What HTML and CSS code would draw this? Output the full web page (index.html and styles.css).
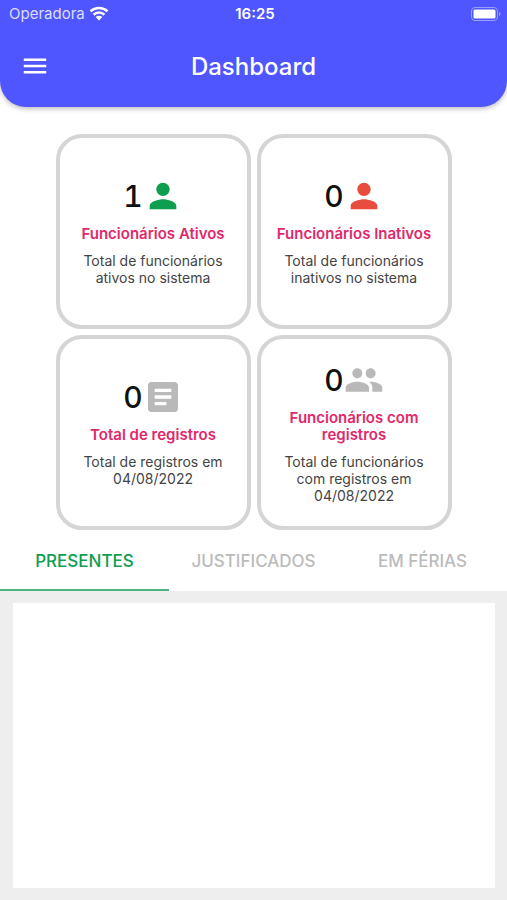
FILE: index.html
```
<!DOCTYPE html>
<html lang="pt-BR">

<head>
  <meta charset="utf-8">
  <meta name="viewport" content="width=device-width, initial-scale=1">
  <title>Dashboard</title>
  <link rel="stylesheet" href="styles.css">
</head>

<body>
  <header class="header">
    <div class="status">
      <div class="carrier">
        <span>Operadora</span>
        <svg class="wifi" viewBox="0 0 20 15">
          <path d="M1.5 5.4a12.3 12.3 0 0 1 17 0M4.6 8.7a7.8 7.8 0 0 1 10.8 0" />
          <path class="fill" d="M10 14.5 6.6 11a4.9 4.9 0 0 1 6.8 0z" />
        </svg>
      </div>
      <span class="time">16:25</span>
      <svg class="battery" viewBox="0 0 30 14">
        <rect class="shell" x="0.5" y="0.5" width="26" height="13" rx="3.5" />
        <rect class="level" x="2.5" y="2.5" width="22" height="9" rx="1.5" />
        <path class="tip" d="M28 5c2 .6 2 3.400 0 4z" />
      </svg>
    </div>
    <div class="toolbar">
      <button class="menu" type="button" aria-label="Menu">
        <svg viewBox="0 0 24 24">
          <path d="M3 18h18v-2H3v2zm0-5h18v-2H3v2zm0-7v2h18V6H3z" />
        </svg>
      </button>
      <h1 class="title">Dashboard</h1>
    </div>
  </header>

  <main class="main">
    <section class="cards">
      <article class="card">
        <div class="count">
          <span>1</span>
          <svg class="icon green" viewBox="0 0 24 24">
            <path d="M12 12c2.210 0 4-1.790 4-4s-1.790-4-4-4-4 1.790-4 4 1.790 4 4 4zm0 2c-2.670 0-8 1.340-8 4v2h16v-2c0-2.660-5.330-4-8-4z" />
          </svg>
        </div>
        <h2 class="name">Funcionários Ativos</h2>
        <p class="text">Total de funcionários ativos no sistema</p>
      </article>
      <article class="card">
        <div class="count">
          <span>0</span>
          <svg class="icon red" viewBox="0 0 24 24">
            <path d="M12 12c2.210 0 4-1.790 4-4s-1.790-4-4-4-4 1.790-4 4 1.790 4 4 4zm0 2c-2.670 0-8 1.340-8 4v2h16v-2c0-2.660-5.330-4-8-4z" />
          </svg>
        </div>
        <h2 class="name">Funcionários Inativos</h2>
        <p class="text">Total de funcionários inativos no sistema</p>
      </article>
      <article class="card">
        <div class="count">
          <span>0</span>
          <svg class="icon" viewBox="0 0 24 24">
            <path d="M19 3H5c-1.100 0-2 .9-2 2v14c0 1.100.9 2 2 2h14c1.100 0 2-.9 2-2V5c0-1.100-.9-2-2-2zm-5 14H7v-2h7v2zm3-4H7v-2h10v2zm0-4H7V7h10v2z" />
          </svg>
        </div>
        <h2 class="name">Total de registros</h2>
        <p class="text">Total de registros em 04/08/2022</p>
      </article>
      <article class="card">
        <div class="count">
          <span>0</span>
          <svg class="icon" viewBox="0 0 24 24">
            <path d="M16 11c1.660 0 2.990-1.340 2.990-3S17.660 5 16 5s-3 1.340-3 3 1.340 3 3 3zm-8 0c1.660 0 2.990-1.340 2.990-3S9.660 5 8 5 5 6.340 5 8s1.340 3 3 3zm0 2c-2.330 0-7 1.170-7 3.500V19h14v-2.500C15 14.170 10.330 13 8 13zm8 0c-.29 0-.62.020-.97.050 1.160.84 1.970 1.970 1.970 3.450V19h6v-2.500c0-2.330-4.670-3.500-7-3.500z" />
          </svg>
        </div>
        <h2 class="name">Funcionários com registros</h2>
        <p class="text">Total de funcionários com registros em 04/08/2022</p>
      </article>
    </section>

    <nav class="tabs">
      <button class="tab ac" type="button">PRESENTES</button>
      <button class="tab" type="button">JUSTIFICADOS</button>
      <button class="tab" type="button">EM FÉRIAS</button>
    </nav>

    <section class="panel">
      <div class="list"></div>
    </section>
  </main>
</body>

</html>
```
FILE: styles.css
```
* {
  margin: 0;
  padding: 0;
  box-sizing: border-box;
}

body {
  display: flex;
  flex-direction: column;
  min-height: 100vh;
  background: #fff;
  font-family: Inter, "Liberation Sans", sans-serif;
}

button {
  border: 0;
  background: none;
  font-family: inherit;
  cursor: pointer;
}

svg {
  display: block;
}

/* header */
.header {
  background: #4f55ff;
  color: #fff;
  border-radius: 0 0 26px 26px;
  box-shadow: 0 2px 5px rgba(0, 0, 0, 0.25);
}

.status {
  display: grid;
  grid-template-columns: 1fr auto 1fr;
  align-items: center;
  height: 27px;
  padding: 0 6px 0 9px;
  font-size: 15px;
}

.carrier {
  display: flex;
  align-items: center;
  gap: 4px;
  color: #dcdeff;
}

.wifi {
  width: 20px;
  height: 15px;
  fill: none;
  stroke: #fff;
  stroke-width: 2.6;
}

.wifi .fill {
  fill: #fff;
  stroke: none;
}

.time {
  font-weight: 600;
}

.battery {
  width: 30px;
  height: 14px;
  justify-self: end;
}

.shell {
  fill: none;
  stroke: #9a9eff;
}

.level {
  fill: #fff;
}

.tip {
  fill: #9a9eff;
}

.toolbar {
  display: grid;
  grid-template-columns: 1fr auto 1fr;
  align-items: center;
  height: 80px;
  padding: 0 20px 2px;
}

.menu {
  width: 30px;
  height: 30px;
}

.menu svg {
  width: 30px;
  height: 30px;
  fill: #fff;
}

.title {
  font-size: 24px;
  font-weight: 500;
}

/* cards */
.main {
  flex: 1;
  display: flex;
  flex-direction: column;
}

.cards {
  display: grid;
  grid-template-columns: 195px 195px;
  justify-content: center;
  gap: 6px;
  padding-top: 27px;
}

.card {
  display: flex;
  flex-direction: column;
  align-items: center;
  justify-content: center;
  min-height: 195px;
  padding: 0 14px 2px;
  border: 4px solid #d5d5d5;
  border-radius: 26px;
  text-align: center;
}

.count {
  display: flex;
  align-items: center;
  color: #111;
  font-size: 30px;
  font-weight: 500;
  font-variant-numeric: tabular-nums;
  line-height: 40px;
}

.icon {
  width: 40px;
  height: 40px;
  fill: #b9b9b9;
}

.green {
  fill: #0f9d4f;
}

.red {
  fill: #e74c3c;
}

.name {
  margin: 9px 0 10px;
  color: #e0286b;
  font-size: 15px;
  font-weight: 600;
  line-height: 17px;
}

.text {
  color: #444;
  font-size: 14px;
  line-height: 17px;
}

/* tabs */
.tabs {
  display: grid;
  grid-template-columns: repeat(3, 1fr);
  height: 61px;
}

.tab {
  padding-top: 2px;
  color: #bbb;
  border-bottom: 2px solid transparent;
  font-size: 17px;
  font-weight: 500;
}

.tab.ac {
  color: #0f9d4f;
  border-bottom-color: #4db37f;
}

.panel {
  flex: 1;
  display: flex;
  padding: 12px 12px 12px 13px;
  background: #eee;
}

.list {
  flex: 1;
  background: #fff;
}
```
